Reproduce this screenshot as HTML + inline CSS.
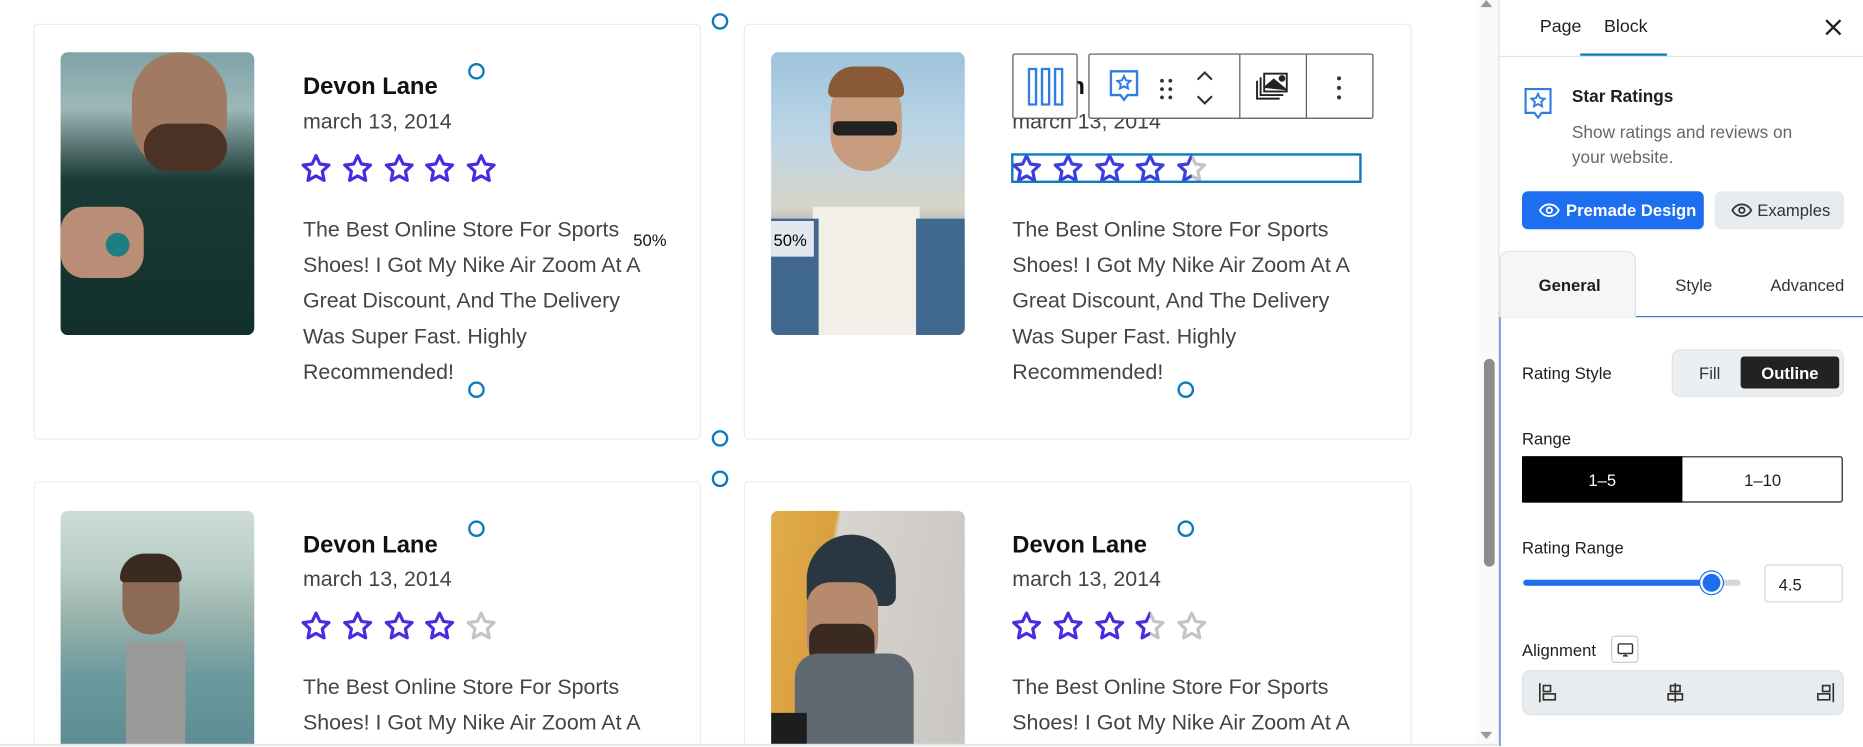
<!DOCTYPE html>
<html><head><meta charset="utf-8">
<style>
*{box-sizing:border-box;margin:0;padding:0}
html,body{width:1863px;height:747px;overflow:hidden;background:#fff;font-family:"Liberation Sans",Arial,sans-serif}
#o{position:absolute;left:0;top:0;width:1863px;height:747px;overflow:hidden}
#w{position:absolute;left:0;top:0;width:1568px;height:628px;overflow:hidden;transform:scale(1.18814);transform-origin:0 0}
.card{position:absolute;border:1px solid #ececec;border-radius:4px;background:#fff}
.img{position:absolute;width:163px;height:238px;border-radius:6px;overflow:hidden}
.name{position:absolute;font-size:20px;font-weight:bold;color:#111}
.date{position:absolute;font-size:18px;color:#444}
.desc{position:absolute;font-size:18px;color:#444;line-height:30px;width:300px}
.stars{position:absolute;height:28px}
.stars svg{position:absolute;top:0}
.h{position:absolute;width:14px;height:14px;border:2.5px solid #0a7bbd;border-radius:50%;background:#fff}
.abs{position:absolute}
.sb{position:absolute;left:1261px;top:0;width:307px;height:628px;border-left:1px solid #e0e0e0;background:#fff}
</style></head><body>
<div id="o">
<div id="w">
<svg width="0" height="0" style="position:absolute"><defs>
<path id="st" d="M12 2.6l2.8 6 6.5.8-4.8 4.5 1.3 6.5L12 17.2l-5.8 3.2 1.3-6.5-4.8-4.5 6.5-.8z" fill="none" stroke-width="2.3" stroke-linejoin="round"/>
</defs></svg>

<div class="card" style="left:28px;top:20px;width:562px;height:350px"></div>
<div class="img" style="left:51px;top:44px;background:linear-gradient(180deg,#7fa3a8 0%,#9db7b8 20%,#1b3a35 45%,#12302b 100%)">
 <div class="abs" style="left:60px;top:0;width:80px;height:100px;border-radius:40px;background:#a07a62"></div>
 <div class="abs" style="left:70px;top:60px;width:70px;height:40px;border-radius:20px;background:#4a3324"></div>
 <div class="abs" style="left:0;top:130px;width:70px;height:60px;background:#b98d76;border-radius:20px"></div>
 <div class="abs" style="left:38px;top:152px;width:20px;height:20px;border-radius:50%;background:#1f7f80"></div>
</div>
<div class="name" style="left:255px;top:62px">Devon Lane</div>
<div class="date" style="left:255px;top:92px">march 13, 2014</div>
<div class="stars" style="left:252px;top:128px">
<svg width="28" height="28" viewBox="0 0 24 24" style="left:0"><use href="#st" stroke="#4a2be0"/></svg>
<svg width="28" height="28" viewBox="0 0 24 24" style="left:35px"><use href="#st" stroke="#4a2be0"/></svg>
<svg width="28" height="28" viewBox="0 0 24 24" style="left:70px"><use href="#st" stroke="#4a2be0"/></svg>
<svg width="28" height="28" viewBox="0 0 24 24" style="left:104px"><use href="#st" stroke="#4a2be0"/></svg>
<svg width="28" height="28" viewBox="0 0 24 24" style="left:139px"><use href="#st" stroke="#4a2be0"/></svg>
</div>
<div class="desc" style="left:255px;top:178px">The Best Online Store For Sports Shoes! I Got My Nike Air Zoom At A Great Discount, And The Delivery Was Super Fast. Highly Recommended!</div>
<div class="abs" style="left:533px;top:194px;font-size:14px;color:#111;background:rgba(255,255,255,.8)">50%</div>
<div class="h" style="left:394px;top:53px"></div>
<div class="h" style="left:394px;top:321px"></div>

<div class="card" style="left:626px;top:20px;width:562px;height:350px"></div>
<div class="img" style="left:649px;top:44px;background:linear-gradient(180deg,#9ec3dc 0%,#bcd6e6 30%,#d8d4c8 55%,#5b7a93 75%,#5a6f85 100%)">
 <div class="abs" style="left:50px;top:20px;width:60px;height:80px;border-radius:30px;background:#c79c7f"></div>
 <div class="abs" style="left:48px;top:12px;width:64px;height:26px;border-radius:30px 30px 6px 6px;background:#8a5a36"></div>
 <div class="abs" style="left:52px;top:58px;width:54px;height:12px;background:#222;border-radius:4px"></div>
 <div class="abs" style="left:35px;top:130px;width:90px;height:108px;background:#f2efe8"></div>
 <div class="abs" style="left:0;top:140px;width:40px;height:98px;background:#41688f"></div>
 <div class="abs" style="left:122px;top:140px;width:41px;height:98px;background:#41688f"></div>
</div>
<div class="abs" style="left:649px;top:186px;width:36px;height:30px;background:rgba(255,255,255,.85);font-size:14px;padding:8px 0 0 2px">50%</div>
<div class="name" style="left:852px;top:62px">Devon Lane</div>
<div class="date" style="left:852px;top:92px">march 13, 2014</div>
<div class="stars" style="left:850px;top:128px">
<svg width="28" height="28" viewBox="0 0 24 24" style="left:0"><use href="#st" stroke="#3b3fe0"/></svg>
<svg width="28" height="28" viewBox="0 0 24 24" style="left:35px"><use href="#st" stroke="#3b3fe0"/></svg>
<svg width="28" height="28" viewBox="0 0 24 24" style="left:70px"><use href="#st" stroke="#3b3fe0"/></svg>
<svg width="28" height="28" viewBox="0 0 24 24" style="left:104px"><use href="#st" stroke="#3b3fe0"/></svg>
<svg width="28" height="28" viewBox="0 0 24 24" style="left:139px"><use href="#st" stroke="#c4c4c4"/></svg>
<div class="abs" style="left:139px;top:0;width:14px;height:28px;overflow:hidden"><svg width="28" height="28" viewBox="0 0 24 24"><use href="#st" stroke="#3b3fe0"/></svg></div>
</div>
<div class="abs" style="left:851px;top:129px;width:295px;height:25px;border:2px solid #0a7bbd"></div>
<div class="desc" style="left:852px;top:178px">The Best Online Store For Sports Shoes! I Got My Nike Air Zoom At A Great Discount, And The Delivery Was Super Fast. Highly Recommended!</div>
<div class="h" style="left:991px;top:321px"></div>

<div class="abs" style="left:852px;top:45px;width:55px;height:55px;border:1px solid #555;border-radius:2px;background:#fff">
 <svg width="30" height="32" viewBox="0 0 30 32" style="position:absolute;left:12px;top:11px" fill="none" stroke="#2f7de1" stroke-width="2"><rect x="1" y="1" width="6" height="30"/><rect x="12" y="1" width="6" height="30"/><rect x="23" y="1" width="6" height="30"/></svg>
</div>
<div class="abs" style="left:916px;top:45px;width:240px;height:55px;border:1px solid #555;border-radius:2px;background:#fff">
 <svg width="26" height="30" viewBox="0 0 26 30" style="position:absolute;left:16px;top:12px" fill="none" stroke="#2f7de1" stroke-width="2"><path d="M2 2h22v20h-8l-3 4-3-4H2z"/><path d="M13 6l1.7 3.6 3.8.5-2.8 2.6.7 3.8L13 14.6l-3.4 1.9.7-3.8-2.8-2.6 3.8-.5z" stroke-width="1.6"/></svg>
 <div class="abs" style="left:59px;top:20px;font-size:0">
  <svg width="12" height="18"><g fill="#333"><circle cx="2" cy="2" r="1.6"/><circle cx="9" cy="2" r="1.6"/><circle cx="2" cy="9" r="1.6"/><circle cx="9" cy="9" r="1.6"/><circle cx="2" cy="16" r="1.6"/><circle cx="9" cy="16" r="1.6"/></g></svg>
 </div>
 <svg width="18" height="32" viewBox="0 0 18 32" style="position:absolute;left:88px;top:12px" fill="none" stroke="#333" stroke-width="1.8"><path d="M3 9l6-6 6 6M3 23l6 6 6-6"/></svg>
 <div class="abs" style="left:126px;top:0;width:1px;height:53px;background:#555"></div>
 <svg width="28" height="26" viewBox="0 0 28 26" style="position:absolute;left:140px;top:14px" fill="none" stroke="#222" stroke-width="1.6"><rect x="7" y="2" width="19" height="15" fill="#fff"/><path d="M7 14l8-7 11 9" fill="#222"/><circle cx="22" cy="6" r="2" fill="#222"/><path d="M4 5v15h19M1 8v15h19"/></svg>
 <div class="abs" style="left:182px;top:0;width:1px;height:53px;background:#555"></div>
 <svg width="6" height="20" style="position:absolute;left:207px;top:18px"><g fill="#333"><circle cx="3" cy="2" r="1.7"/><circle cx="3" cy="10" r="1.7"/><circle cx="3" cy="18" r="1.7"/></g></svg>
</div>

<div class="h" style="left:599px;top:11px"></div>
<div class="h" style="left:599px;top:362px"></div>
<div class="h" style="left:599px;top:396px"></div>

<div class="card" style="left:28px;top:405px;width:562px;height:224px;border-bottom:none;border-radius:4px 4px 0 0"></div>
<div class="img" style="left:51px;top:430px;height:198px;border-radius:6px 6px 0 0;background:linear-gradient(180deg,#cfdcd6 0%,#b8ccc6 25%,#9ab3ad 45%,#6b9a9e 70%,#5d8d92 100%)">
 <div class="abs" style="left:52px;top:40px;width:48px;height:64px;border-radius:24px;background:#8c6a55"></div>
 <div class="abs" style="left:50px;top:36px;width:52px;height:24px;border-radius:24px 24px 4px 4px;background:#3b2a22"></div>
 <div class="abs" style="left:55px;top:110px;width:50px;height:88px;background:#9a9a98"></div>
</div>
<div class="name" style="left:255px;top:448px">Devon Lane</div>
<div class="date" style="left:255px;top:477px">march 13, 2014</div>
<div class="stars" style="left:252px;top:513px">
<svg width="28" height="28" viewBox="0 0 24 24" style="left:0"><use href="#st" stroke="#4a2be0"/></svg>
<svg width="28" height="28" viewBox="0 0 24 24" style="left:35px"><use href="#st" stroke="#4a2be0"/></svg>
<svg width="28" height="28" viewBox="0 0 24 24" style="left:70px"><use href="#st" stroke="#4a2be0"/></svg>
<svg width="28" height="28" viewBox="0 0 24 24" style="left:104px"><use href="#st" stroke="#4a2be0"/></svg>
<svg width="28" height="28" viewBox="0 0 24 24" style="left:139px"><use href="#st" stroke="#c4c4c4"/></svg>
</div>
<div class="desc" style="left:255px;top:563px;height:60px;overflow:hidden">The Best Online Store For Sports Shoes! I Got My Nike Air Zoom At A</div>
<div class="h" style="left:394px;top:438px"></div>

<div class="card" style="left:626px;top:405px;width:562px;height:224px;border-bottom:none;border-radius:4px 4px 0 0"></div>
<div class="img" style="left:649px;top:430px;height:198px;border-radius:6px 6px 0 0;background:linear-gradient(100deg,#e2ac4a 0%,#d9a040 28%,#d8d5d0 30%,#c9c6c2 100%)">
 <div class="abs" style="left:30px;top:20px;width:75px;height:60px;border-radius:38px 38px 8px 8px;background:#2a3640"></div>
 <div class="abs" style="left:30px;top:60px;width:60px;height:70px;border-radius:20px;background:#b78a6d"></div>
 <div class="abs" style="left:32px;top:95px;width:55px;height:35px;border-radius:12px;background:#3a2a22"></div>
 <div class="abs" style="left:20px;top:120px;width:100px;height:78px;background:#5f6870;border-radius:20px 20px 0 0"></div>
 <div class="abs" style="left:0;top:170px;width:30px;height:28px;background:#1d1d1d"></div>
</div>
<div class="name" style="left:852px;top:448px">Devon Lane</div>
<div class="date" style="left:852px;top:477px">march 13, 2014</div>
<div class="stars" style="left:850px;top:513px">
<svg width="28" height="28" viewBox="0 0 24 24" style="left:0"><use href="#st" stroke="#4a2be0"/></svg>
<svg width="28" height="28" viewBox="0 0 24 24" style="left:35px"><use href="#st" stroke="#4a2be0"/></svg>
<svg width="28" height="28" viewBox="0 0 24 24" style="left:70px"><use href="#st" stroke="#4a2be0"/></svg>
<svg width="28" height="28" viewBox="0 0 24 24" style="left:104px"><use href="#st" stroke="#c4c4c4"/></svg>
<div class="abs" style="left:104px;top:0;width:14px;height:28px;overflow:hidden"><svg width="28" height="28" viewBox="0 0 24 24"><use href="#st" stroke="#4a2be0"/></svg></div>
<svg width="28" height="28" viewBox="0 0 24 24" style="left:139px"><use href="#st" stroke="#c4c4c4"/></svg>
</div>
<div class="desc" style="left:852px;top:563px;height:60px;overflow:hidden">The Best Online Store For Sports Shoes! I Got My Nike Air Zoom At A</div>
<div class="h" style="left:991px;top:438px"></div>

<div class="abs" style="left:1243px;top:0;width:18px;height:626px;background:#fafafa"></div>
<div class="abs" style="left:1246px;top:0;width:0;height:0;border-left:5px solid transparent;border-right:5px solid transparent;border-bottom:6px solid #999"></div>
<div class="abs" style="left:1246px;top:616px;width:0;height:0;border-left:5px solid transparent;border-right:5px solid transparent;border-top:6px solid #999"></div>
<div class="abs" style="left:1249px;top:302px;width:9px;height:175px;border-radius:5px;background:#8c8c8c"></div>
<div class="abs" style="left:0;top:626px;width:1262px;height:2px;background:#e6e6e6"></div>

<div class="sb">
 <div class="abs" style="left:34px;top:14px;font-size:15px;color:#1e1e1e">Page</div>
 <div class="abs" style="left:88px;top:14px;font-size:15px;color:#1e1e1e">Block</div>
 <div class="abs" style="left:68px;top:45px;width:73px;height:2px;background:#0a7bbd"></div>
 <div class="abs" style="left:0;top:47px;width:307px;height:1px;background:#e0e0e0"></div>
 <svg width="14" height="14" style="position:absolute;left:274px;top:16px" stroke="#1e1e1e" stroke-width="2"><path d="M1 1l12 12M13 1L1 13"/></svg>
 <svg width="26" height="30" viewBox="0 0 26 30" style="position:absolute;left:20px;top:73px" fill="none" stroke="#2f7de1" stroke-width="1.8"><path d="M2 2h21v20h-7.5l-3 4-3-4H2z"/><path d="M12.5 6l1.7 3.6 3.8.5-2.8 2.6.7 3.8-3.4-1.9-3.4 1.9.7-3.8-2.8-2.6 3.8-.5z" stroke-width="1.6"/></svg>
 <div class="abs" style="left:61px;top:74px;font-size:14.5px;font-weight:bold;color:#1e1e1e">Star Ratings</div>
 <div class="abs" style="left:61px;top:102px;font-size:14.5px;color:#666;line-height:21px;width:205px">Show ratings and reviews on your website.</div>
 <div class="abs" style="left:19px;top:161px;width:153px;height:32px;background:#1d6ff0;border-radius:5px;color:#fff;font-size:14px;font-weight:bold;padding:8px 0 0 37px">Premade Design</div>
 <svg width="18" height="12" viewBox="0 0 18 12" style="position:absolute;left:33px;top:171px" fill="none" stroke="#fff" stroke-width="1.5"><path d="M1 6c2-3.5 5-5 8-5s6 1.5 8 5c-2 3.5-5 5-8 5S3 9.5 1 6z"/><circle cx="9" cy="6" r="2.3"/></svg>
 <div class="abs" style="left:181px;top:161px;width:109px;height:32px;background:#e9ecef;border-radius:6px;color:#333;font-size:14px;padding:8px 0 0 36px">Examples</div>
 <svg width="18" height="12" viewBox="0 0 18 12" style="position:absolute;left:195px;top:171px" fill="none" stroke="#333" stroke-width="1.5"><path d="M1 6c2-3.5 5-5 8-5s6 1.5 8 5c-2 3.5-5 5-8 5S3 9.5 1 6z"/><circle cx="9" cy="6" r="2.3"/></svg>
 <div class="abs" style="left:0;top:266px;width:306px;height:1px;background:#3a72d6"></div>
 <div class="abs" style="left:0;top:266px;width:1px;height:362px;background:#3a72d6"></div>
 <div class="abs" style="left:0;top:211px;width:115px;height:56px;background:#f5f6f8;border:1px solid #dde1e6;border-bottom:none;border-radius:8px 8px 0 0"></div>
 <div class="abs" style="left:33px;top:232px;font-size:14px;font-weight:bold;color:#1e1e1e">General</div>
 <div class="abs" style="left:148px;top:232px;font-size:14px;color:#333">Style</div>
 <div class="abs" style="left:228px;top:232px;font-size:14px;color:#333">Advanced</div>

 <div class="abs" style="left:19px;top:306px;font-size:14px;color:#1e1e1e">Rating Style</div>
 <div class="abs" style="left:145px;top:294px;width:145px;height:40px;background:#eceff2;border:1px solid #dde1e6;border-radius:7px"></div>
 <div class="abs" style="left:168px;top:306px;font-size:14px;color:#333">Fill</div>
 <div class="abs" style="left:203px;top:300px;width:83px;height:27px;background:#222;border-radius:3px;color:#fff;font-size:14px;font-weight:bold;text-align:center;padding-top:6px">Outline</div>

 <div class="abs" style="left:19px;top:361px;font-size:14px;color:#1e1e1e">Range</div>
 <div class="abs" style="left:19px;top:384px;height:39px;border:1.5px solid #1e1e1e;border-radius:2px;width:270px"></div>
 <div class="abs" style="left:19px;top:384px;width:135px;height:39px;background:#000;color:#fff;font-size:14px;text-align:center;padding-top:12px">1–5</div>
 <div class="abs" style="left:154px;top:384px;width:135px;height:39px;color:#1e1e1e;font-size:14px;text-align:center;padding-top:12px">1–10</div>

 <div class="abs" style="left:19px;top:453px;font-size:14px;color:#1e1e1e">Rating Range</div>
 <div class="abs" style="left:20px;top:488px;width:183px;height:5px;border-radius:3px;background:#d6d6d6"></div>
 <div class="abs" style="left:20px;top:488px;width:160px;height:5px;border-radius:3px;background:#1d6ff0"></div>
 <div class="abs" style="left:169px;top:481px;width:19px;height:19px;border-radius:50%;background:#1d6ff0;border:2px solid #fff;box-shadow:0 0 0 1px #1d6ff0"></div>
 <div class="abs" style="left:223px;top:475px;width:66px;height:32px;border:1px solid #d6d6d6;border-radius:3px;font-size:14px;color:#1e1e1e;padding:8px 0 0 11px">4.5</div>

 <div class="abs" style="left:19px;top:539px;font-size:14px;color:#1e1e1e">Alignment</div>
 <div class="abs" style="left:94px;top:535px;width:23px;height:23px;border:1px solid #ccc;border-radius:3px"></div>
 <svg width="14" height="12" viewBox="0 0 14 12" style="position:absolute;left:99px;top:541px" fill="none" stroke="#333" stroke-width="1.2"><rect x="1" y="1" width="12" height="8" rx="1"/><path d="M5 11h4M7 9v2"/></svg>
 <div class="abs" style="left:19px;top:564px;width:271px;height:38px;background:#e9ecef;border:1px solid #dde1e6;border-radius:7px"></div>
 <svg width="18" height="18" viewBox="0 0 18 18" style="position:absolute;left:32px;top:574px" fill="none" stroke="#333" stroke-width="1.4"><path d="M2 1v16"/><rect x="5" y="3" width="6" height="5"/><rect x="5" y="10" width="10" height="5"/></svg>
 <svg width="18" height="18" viewBox="0 0 18 18" style="position:absolute;left:139px;top:574px" fill="none" stroke="#333" stroke-width="1.4"><path d="M9 1v16"/><rect x="5" y="3" width="8" height="5"/><rect x="3" y="10" width="12" height="5"/></svg>
 <svg width="18" height="18" viewBox="0 0 18 18" style="position:absolute;left:265px;top:574px" fill="none" stroke="#333" stroke-width="1.4"><path d="M16 1v16"/><rect x="7" y="3" width="6" height="5"/><rect x="3" y="10" width="10" height="5"/></svg>
</div>
</div>
</div>
</body></html>
